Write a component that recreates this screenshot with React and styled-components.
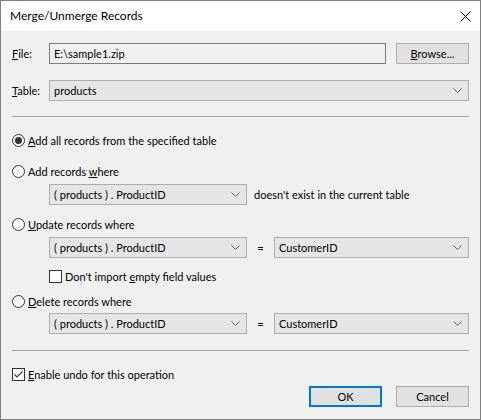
import React from 'react';
import styled, { createGlobalStyle } from 'styled-components';

const GlobalStyle = createGlobalStyle`
  html, body {
    margin: 0;
    padding: 0;
    background: #ffffff;
  }
  body {
    font-family: Lato, "Segoe UI", sans-serif;
    font-size: 11px;
    color: #000;
  }
`;

const Window = styled.div`
  width: 481px;
  height: 420px;
  box-sizing: border-box;
  border: 1px solid #7f7f7f;
  display: flex;
  flex-direction: column;
  background: #f0f0f0;
`;

const TitleBar = styled.div`
  height: 30px;
  flex-shrink: 0;
  background: #ffffff;
  display: flex;
  align-items: center;
  justify-content: space-between;
  padding: 0 9px 0 9px;
`;

const Title = styled.span`
  font-size: 12px;
  line-height: 16px;
`;

const CloseButton = styled.div`
  width: 11px;
  height: 11px;
  display: flex;
`;

const Body = styled.div`
  flex: 1;
  display: flex;
  flex-direction: column;
  padding: 12px 11px 0 11px;
`;

const Row = styled.div`
  display: flex;
  align-items: center;
  height: 21px;
  margin-top: ${p => p.$top || 0}px;
  padding-left: ${p => p.$indent || 0}px;
  justify-content: ${p => p.$end ? 'flex-end' : 'flex-start'};
`;

const Label = styled.span`
  width: 37px;
  flex-shrink: 0;
  white-space: nowrap;
`;

const TextBox = styled.div`
  flex: 1;
  height: 21px;
  box-sizing: border-box;
  border: 1px solid #7a7a7a;
  background: #f0f0f0;
  display: flex;
  align-items: center;
  padding-left: 4px;
  margin-right: 10px;
`;

const Button = styled.div`
  width: 73px;
  height: 21px;
  box-sizing: border-box;
  border: ${p => p.$focused ? '2px solid #0078d7' : '1px solid #adadad'};
  background: #e1e1e1;
  display: flex;
  align-items: center;
  justify-content: center;
  margin-left: ${p => p.$left || 0}px;
  flex-shrink: 0;
`;

const Combo = styled.div`
  ${p => p.$width ? `width: ${p.$width}px; flex-shrink: 0;` : 'flex: 1;'}
  height: 21px;
  box-sizing: border-box;
  border: 1px solid #adadad;
  background: #e5e5e5;
  display: flex;
  align-items: center;
  justify-content: space-between;
  padding: 0 6px 0 4px;
`;

const Equals = styled.span`
  width: 27px;
  flex-shrink: 0;
  text-align: center;
`;

const Trailing = styled.span`
  margin-left: 7px;
  white-space: nowrap;
`;

const Separator = styled.div`
  height: 1px;
  background: #a0a0a0;
  margin-top: ${p => p.$top}px;
`;

const Option = styled.label`
  display: flex;
  align-items: center;
  height: 16px;
  margin-top: ${p => p.$top || 0}px;
  padding-left: ${p => p.$indent || 0}px;
  white-space: nowrap;
`;

const RadioCircle = styled.span`
  width: 13px;
  height: 13px;
  box-sizing: border-box;
  border-radius: 50%;
  border: 1px solid #333333;
  background: #ffffff;
  display: flex;
  align-items: center;
  justify-content: center;
  margin-right: 3px;
  flex-shrink: 0;

  &::after {
    content: '';
    display: ${p => p.$checked ? 'block' : 'none'};
    width: 7px;
    height: 7px;
    border-radius: 50%;
    background: #333333;
  }
`;

const CheckBox = styled.span`
  width: 13px;
  height: 13px;
  box-sizing: border-box;
  border: 1px solid #333333;
  background: #ffffff;
  display: flex;
  align-items: center;
  justify-content: center;
  margin-right: 3px;
  flex-shrink: 0;
`;

const Chevron = () => (
  <svg width="9" height="5" viewBox="0 0 9 5">
    <polyline points="0.5,0.5 4.5,4.5 8.5,0.5" fill="none" stroke="#606060" strokeWidth="1" />
  </svg>
);

const Check = () => (
  <svg width="11" height="11" viewBox="0 0 11 11">
    <polyline points="1.5,5.5 4,8 9.5,2.5" fill="none" stroke="#333333" strokeWidth="1.1" />
  </svg>
);

const Radio = ({ checked, children, top }) => (
  <Option $top={top}>
    <RadioCircle $checked={checked} />
    <span>{children}</span>
  </Option>
);

const Checkbox = ({ checked, children, top, indent }) => (
  <Option $top={top} $indent={indent}>
    <CheckBox>{checked && <Check />}</CheckBox>
    <span>{children}</span>
  </Option>
);

const ComboBox = ({ value, width }) => (
  <Combo $width={width}>
    <span>{value}</span>
    <Chevron />
  </Combo>
);

export default function App() {
  return (
    <>
      <GlobalStyle />
      <Window>
        <TitleBar>
          <Title>Merge/Unmerge Records</Title>
          <CloseButton>
            <svg width="11" height="11" viewBox="0 0 11 11">
              <path d="M0.5 0.5 L10.5 10.5 M10.5 0.5 L0.5 10.5" stroke="#000" strokeWidth="1" />
            </svg>
          </CloseButton>
        </TitleBar>
        <Body>
          <Row>
            <Label><u>F</u>ile:</Label>
            <TextBox>E:\sample1.zip</TextBox>
            <Button><span><u>B</u>rowse...</span></Button>
          </Row>
          <Row $top={16}>
            <Label><u>T</u>able:</Label>
            <ComboBox value="products" />
          </Row>

          <Separator $top={15} />

          <Radio checked top={15}><u>A</u>dd all records from the specified table</Radio>

          <Radio top={15}>Add records <u>w</u>here</Radio>
          <Row $top={5} $indent={37}>
            <ComboBox value="( products ) . ProductID" width={198} />
            <Trailing>doesn't exist in the current table</Trailing>
          </Row>

          <Radio top={11}><u>U</u>pdate records where</Radio>
          <Row $top={5} $indent={37}>
            <ComboBox value="( products ) . ProductID" width={198} />
            <Equals>=</Equals>
            <ComboBox value="CustomerID" />
          </Row>
          <Checkbox top={10} indent={37}>Don't import <u>e</u>mpty field values</Checkbox>

          <Radio top={9}><u>D</u>elete records where</Radio>
          <Row $top={4} $indent={37}>
            <ComboBox value="( products ) . ProductID" width={198} />
            <Equals>=</Equals>
            <ComboBox value="CustomerID" />
          </Row>

          <Separator $top={16} />

          <Checkbox checked top={15}><u>E</u>nable undo for this operation</Checkbox>
          <Row $top={4} $end>
            <Button $focused>OK</Button>
            <Button $left={14}>Cancel</Button>
          </Row>
        </Body>
      </Window>
    </>
  );
}
